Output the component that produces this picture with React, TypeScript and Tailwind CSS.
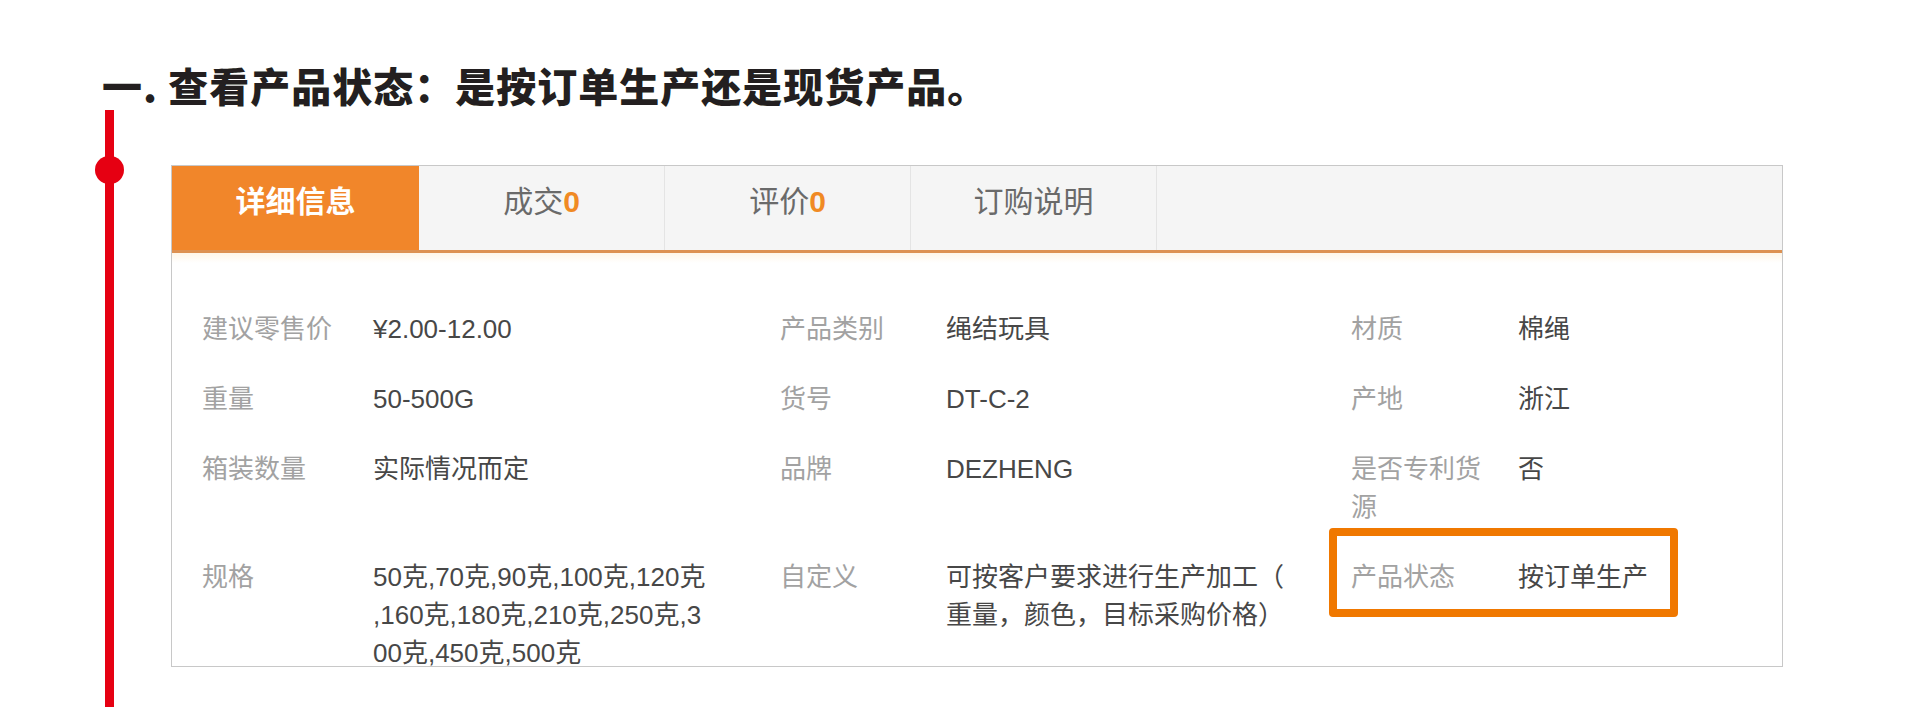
import React from "react";

const rows: { l1: string; v1: string; l2: string; v2: string; l3: string; v3: string }[] = [
  { l1: "建议零售价", v1: "¥2.00-12.00", l2: "产品类别", v2: "绳结玩具", l3: "材质", v3: "棉绳" },
  { l1: "重量", v1: "50-500G", l2: "货号", v2: "DT-C-2", l3: "产地", v3: "浙江" },
  { l1: "箱装数量", v1: "实际情况而定", l2: "品牌", v2: "DEZHENG", l3: "是否专利货源", v3: "否" },
  {
    l1: "规格",
    v1: "50克,70克,90克,100克,120克,160克,180克,210克,250克,300克,450克,500克",
    l2: "自定义",
    v2: "可按客户要求进行生产加工（重量，颜色，目标采购价格）",
    l3: "产品状态",
    v3: "按订单生产",
  },
];

function Tab({ children, active }: { children: React.ReactNode; active?: boolean }) {
  if (active) {
    return (
      <div className="w-[247px] h-full flex items-center justify-center pb-[14px] bg-[#f1862a] text-white font-bold text-[30px]">
        {children}
      </div>
    );
  }
  return (
    <div className="w-[246px] h-full flex items-center justify-center pb-[14px] border-r border-[#e4e4e4] text-[#6a6a6a] text-[30px]">
      {children}
    </div>
  );
}

export default function App() {
  return (
    <div
      className="w-[1920px] h-[707px] overflow-hidden bg-white"
      style={{ fontFamily: '"Liberation Sans", "Noto Sans CJK SC", sans-serif' }}
    >
      <div
        className="pl-[102px] pt-[65px] text-[40px] leading-[40px] font-black tracking-[1px] text-[#231f20]"
        style={{ fontFamily: '"Noto Sans CJK SC", sans-serif' }}
      >
        一. 查看产品状态：是按订单生产还是现货产品。
      </div>
      <div className="flex mt-[5px] h-[600px]">
        <div className="relative ml-[105px] w-[9px] h-full bg-[#e60012]">
          <div className="absolute left-[-10px] top-[46px] w-[29px] h-[28px] rounded-full bg-[#e60012]" />
        </div>
        <div className="ml-[57px] mt-[55px] w-[1612px] h-[502px] border border-[#c8c8c8] overflow-hidden relative bg-white">
          <div className="h-[84px] flex bg-[#f5f5f5]">
            <Tab active>详细信息</Tab>
            <Tab>
              成交<span className="text-[#f08a24] font-bold">0</span>
            </Tab>
            <Tab>
              评价<span className="text-[#f08a24] font-bold">0</span>
            </Tab>
            <Tab>订购说明</Tab>
          </div>
          <div className="h-[3px] bg-[#dd9152]" />
          <div className="h-[10px] bg-gradient-to-b from-[#fff6e8] to-white" />
          <div className="pl-[30px] pt-[47px] grid grid-cols-[171px_407px_166px_405px_167px_1fr] gap-y-[32px] text-[26px] leading-[38px]">
            {rows.map((r, i) => (
              <React.Fragment key={i}>
                <div className="text-[#a2a2a2]">{r.l1}</div>
                <div className="text-[#474747] w-[335px] [line-break:anywhere]">{r.v1}</div>
                <div className="text-[#a2a2a2]">{r.l2}</div>
                <div className="text-[#474747] w-[350px] [line-break:anywhere]">{r.v2}</div>
                <div className="text-[#a2a2a2] w-[140px]">{r.l3}</div>
                <div className="text-[#474747]">{r.v3}</div>
              </React.Fragment>
            ))}
          </div>
          <div className="absolute left-[1157px] top-[362px] w-[349px] h-[89px] border-[8px] border-[#f07800] rounded-[4px]" />
        </div>
      </div>
    </div>
  );
}
